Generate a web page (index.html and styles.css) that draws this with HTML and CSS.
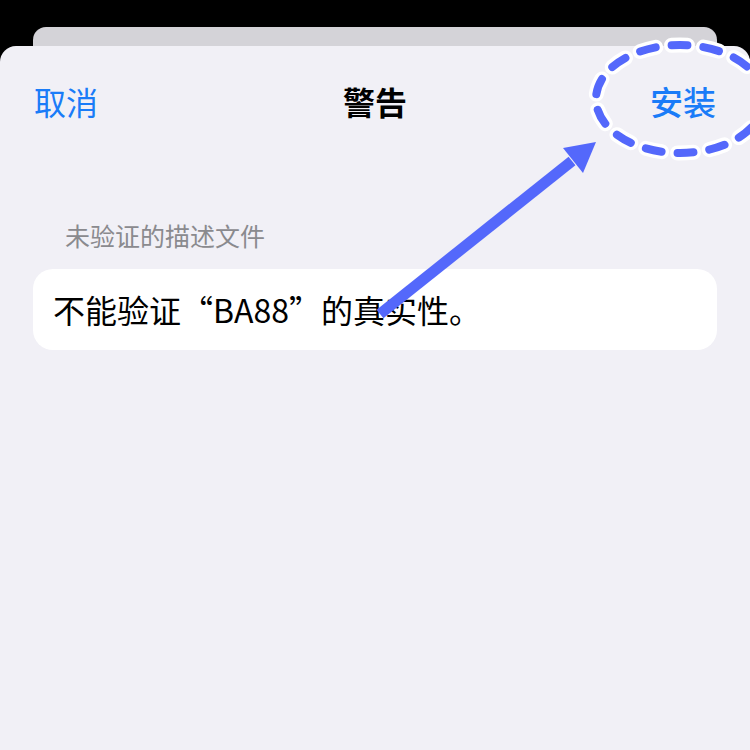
FILE: index.html
```html
<!DOCTYPE html>
<html lang="zh-CN">
  <head>
    <meta charset="UTF-8" />
    <meta name="viewport" content="width=device-width, initial-scale=1.0" />
    <title>警告</title>
    <link rel="stylesheet" href="styles.css">
  </head>
  <body>
    <div class="screen">
      <div class="sheet-behind"></div>
      <div class="sheet">
        <div class="nav-bar">
          <span class="nav-btn">取消</span>
          <span class="nav-title">警告</span>
          <span class="nav-btn nav-btn-right">安装</span>
        </div>
        <div class="section-header">未验证的描述文件</div>
        <div class="group">
          <div class="group-row">不能验证“BA88”的真实性。</div>
        </div>
      </div>

      <!-- annotation drawn over the screenshot -->
      <svg class="markup" width="750" height="750" viewBox="0 0 750 750">
        <ellipse cx="680" cy="99" rx="84" ry="54" fill="none" stroke="#ffffff"
          stroke-width="15" stroke-dasharray="16 16" stroke-linecap="round" />
        <ellipse cx="680" cy="99" rx="84" ry="54" fill="none" stroke="#5468fb"
          stroke-width="8" stroke-dasharray="16 16" stroke-linecap="round" />
        <line x1="380" y1="314" x2="572" y2="161" stroke="#5468fb" stroke-width="11" />
        <polygon points="596,142 563,148 583,173" fill="#5468fb" />
      </svg>
    </div>
  </body>
</html>
```

FILE: styles.css
```css
body {
  margin: 0;
  background: #000;
  font-family: "Noto Sans CJK SC", "Noto Sans", sans-serif;
}

.screen {
  position: relative;
  width: 750px;
  height: 750px;
  overflow: hidden;
  padding-top: 27px;
  box-sizing: border-box;
  display: flex;
  flex-direction: column;
}

.sheet-behind {
  height: 19px;
  margin: 0 33px;
  background: #d4d3d8;
  border-radius: 13px 13px 0 0;
}

.sheet {
  flex: 1;
  background: #f1f0f6;
  border-radius: 16px 16px 0 0;
}

.nav-bar {
  display: grid;
  grid-template-columns: 1fr auto 1fr;
  align-items: center;
  padding: 29px 34px 0;
  font-size: 32px;
  line-height: 52px;
}

.nav-btn {
  color: #1a7cf8;
}

.nav-btn-right {
  text-align: right;
  font-weight: 500;
  font-size: 33px;
}

.nav-title {
  color: #000;
  font-weight: 700;
}

.section-header {
  margin-top: 88px;
  padding-left: 65px;
  font-size: 25px;
  line-height: 40px;
  color: #8a8a8e;
}

.group {
  margin: 14px 33px 0;
  background: #fff;
  border-radius: 20px;
}

.group-row {
  padding: 0 20px;
  font-size: 32px;
  line-height: 81px;
  color: #000;
}

.markup {
  position: absolute;
  left: 0;
  top: 0;
}
```
